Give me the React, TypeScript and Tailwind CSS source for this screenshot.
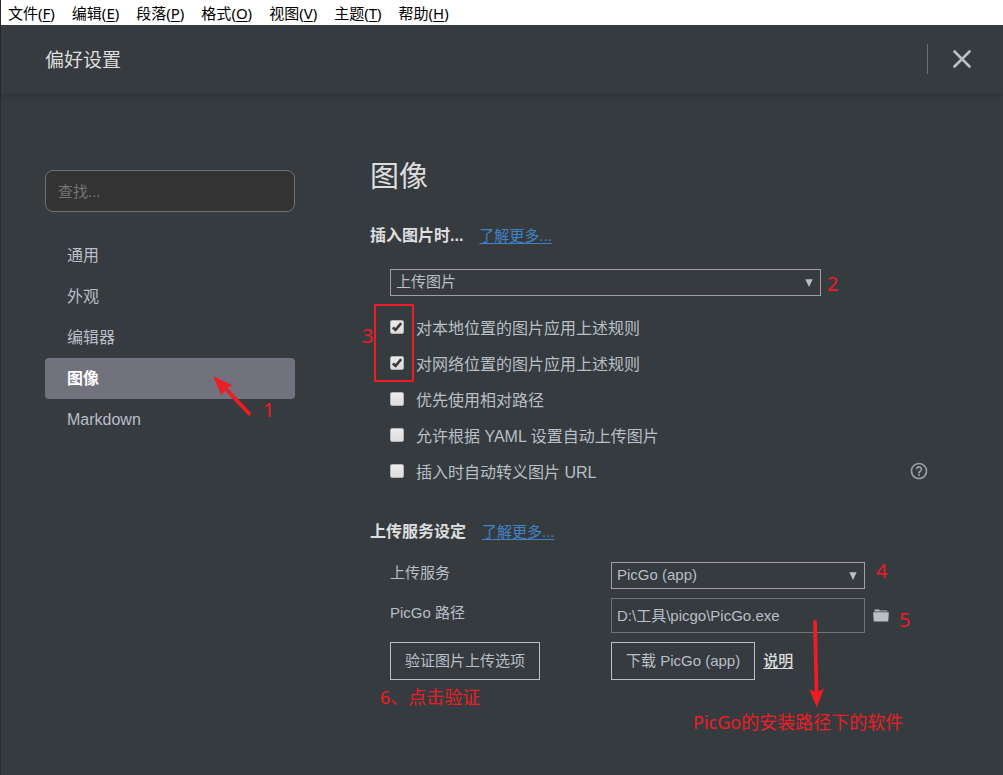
import { ChangeEvent, ReactNode, useState } from "react";
import { MdHelpOutline } from "react-icons/md";

const menuItems = [
  { label: "文件", key: "F" },
  { label: "编辑", key: "E" },
  { label: "段落", key: "P" },
  { label: "格式", key: "O" },
  { label: "视图", key: "V" },
  { label: "主题", key: "T" },
  { label: "帮助", key: "H" },
];

const sections = ["通用", "外观", "编辑器", "图像", "Markdown"];

const initialRules = [
  { id: "local", label: "对本地位置的图片应用上述规则", checked: true },
  { id: "network", label: "对网络位置的图片应用上述规则", checked: true },
  { id: "relative", label: "优先使用相对路径", checked: false },
  { id: "yaml", label: "允许根据 YAML 设置自动上传图片", checked: false },
  { id: "escape", label: "插入时自动转义图片 URL", checked: false },
];

function MenuBar() {
  return (
    <nav className="flex h-[25px] items-center gap-[17px] bg-white pt-0.5 pl-[7px] font-['Noto_Sans','Noto_Sans_CJK_SC',sans-serif] text-[15px] text-black">
      {menuItems.map((item) => (
        <button key={item.key} type="button" className="whitespace-nowrap">
          {item.label}(<u className="underline-offset-2">{item.key}</u>)
        </button>
      ))}
    </nav>
  );
}

function Header() {
  return (
    <header className="flex h-[70px] items-center justify-between border-b border-[#313539] pr-8 pb-0.5 pl-11 shadow-sm">
      <div className="pt-1.5 text-[19px] text-[#dedede]">偏好设置</div>
      <div className="flex items-center gap-[25px]">
        <div className="h-[30px] w-px bg-[#6d7175]" />
        <button type="button" aria-label="关闭">
          <svg
            viewBox="0 0 18 18"
            className="h-[18px] w-[18px] stroke-[#b8bfc6]"
            strokeWidth="2.6"
            strokeLinecap="round"
          >
            <path d="M1.5 1.5 16.5 16.5M16.5 1.5 1.5 16.5" />
          </svg>
        </button>
      </div>
    </header>
  );
}

function Note({ className, children }: { className: string; children: ReactNode }) {
  return (
    <span
      className={`pointer-events-none absolute font-['Noto_Sans','Noto_Sans_CJK_SC',sans-serif] leading-6 font-normal whitespace-nowrap text-[#ee1c25] ${className}`}
    >
      {children}
    </span>
  );
}

function Sidebar() {
  const [current, setCurrent] = useState("图像");

  return (
    <aside className="mt-[15px] w-[250px] shrink-0">
      <input
        type="text"
        aria-label="查找"
        placeholder="查找..."
        className="h-[42px] w-full rounded-lg border border-[#6f7173] bg-[#333333] px-3 text-[15px] placeholder:text-[#757575] focus:outline-none"
      />
      <ul className="mt-[23px]">
        {sections.map((name) => (
          <li key={name} className="relative">
            <button
              type="button"
              onClick={() => setCurrent(name)}
              className={
                name === current
                  ? "h-[41px] w-full rounded bg-[#72727e] pl-[22px] text-left text-base font-bold text-white"
                  : "h-[41px] w-full rounded pl-[22px] text-left text-base"
              }
            >
              {name}
            </button>
            {name === "图像" && (
              <>
                <svg
                  viewBox="0 0 40 42"
                  className="pointer-events-none absolute top-[17px] left-[167px] z-10 h-[42px] w-10"
                >
                  <path d="M13 13 37 38.5" stroke="#ee1c25" strokeWidth="4" strokeLinecap="round" />
                  <path d="M1 1 20.5 10.5 13.8 13 9.5 20.5Z" fill="#ee1c25" />
                </svg>
                <Note className="top-10 left-[218px] z-10 text-xl">1</Note>
              </>
            )}
          </li>
        ))}
      </ul>
    </aside>
  );
}

function SelectBox({
  id,
  label,
  options,
  className,
}: {
  id: string;
  label?: string;
  options: string[];
  className: string;
}) {
  return (
    <div className={`relative ${className}`}>
      <select
        id={id}
        aria-label={label}
        className="block h-[27px] w-full appearance-none border border-[#a09ea2] bg-transparent pb-0.5 pl-[5px] text-[15px] leading-5 focus:outline-none"
      >
        {options.map((option) => (
          <option key={option} className="bg-[#363b40]">
            {option}
          </option>
        ))}
      </select>
      <svg
        viewBox="0 0 8 8"
        className="pointer-events-none absolute top-[10px] right-2 h-2 w-2 fill-[#b8bfc6]"
      >
        <path d="M0.3 0.3h7.4L4 8Z" />
      </svg>
    </div>
  );
}

function SectionTitle({ title }: { title: string }) {
  return (
    <div className="flex items-center gap-4 leading-6">
      <h2 className="text-base leading-6 font-bold text-[#dedede]">{title}</h2>
      <a href="#more" className="text-[15px] text-[#4183c4] underline underline-offset-2">
        了解更多...
      </a>
    </div>
  );
}

function Rules() {
  const [rules, setRules] = useState(initialRules);

  const handleChange = (e: ChangeEvent<HTMLInputElement>) => {
    setRules(
      rules.map((rule) => (rule.id === e.target.id ? { ...rule, checked: e.target.checked } : rule))
    );
  };

  return (
    <div className="relative mt-[15px] ml-5">
      {rules.map((rule) => (
        <div key={rule.id} className="flex h-9 items-center">
          <div className="relative mr-3 mb-1 h-[14px] w-[14px]">
            <input
              type="checkbox"
              id={rule.id}
              checked={rule.checked}
              onChange={handleChange}
              className="peer block h-[14px] w-[14px] appearance-none rounded-xs border border-[#b4b4b4] bg-linear-to-b from-[#ececec] to-[#dcdcdc]"
            />
            <svg
              viewBox="0 0 14 14"
              className="pointer-events-none absolute inset-0 hidden h-[14px] w-[14px] peer-checked:block"
              fill="none"
              stroke="#3c3c3c"
              strokeWidth="2.6"
            >
              <path d="M2.8 7.4 5.6 9.8 11.2 3.2" />
            </svg>
          </div>
          <label htmlFor={rule.id} className="text-base">
            {rule.label}
          </label>
          {rule.id === "escape" && (
            <button type="button" aria-label="帮助" className="mb-1 ml-auto">
              <MdHelpOutline className="h-5 w-5 text-[#9a9fa4]" />
            </button>
          )}
        </div>
      ))}
      <div className="pointer-events-none absolute -top-[7px] -left-4 h-[78px] w-10 border-2 border-[#ee1c25]" />
      <Note className="top-[13px] -left-7 text-xl">3</Note>
    </div>
  );
}

function UploadService() {
  const [path, setPath] = useState("D:\\工具\\picgo\\PicGo.exe");

  return (
    <div className="mt-[18px] ml-5 grid grid-cols-[221px_1fr] gap-y-[9px] text-[15px]">
      <label htmlFor="service" className="leading-[22px]">
        上传服务
      </label>
      <div className="relative w-[254px]">
        <SelectBox id="service" options={["PicGo (app)"]} className="w-full" />
        <Note className="-top-[3px] left-[265px] text-xl">4</Note>
      </div>

      <label htmlFor="path" className="pt-1 leading-[22px]">
        PicGo 路径
      </label>
      <div className="relative flex items-center gap-2">
        <input
          type="text"
          id="path"
          value={path}
          onChange={(e) => setPath(e.target.value)}
          className="h-[35px] w-[254px] border border-[#707376] bg-transparent px-[5px] pb-0.5 focus:outline-none"
        />
        <button type="button" aria-label="选择文件夹">
          <svg viewBox="0 0 16 13" className="h-[13px] w-4 fill-[#b8bfc6]">
            <path d="M1.5 2.6V1.2Q1.5.5 2.2.5H6L7 1.6H13.8Q14.5 1.6 14.5 2.3V2.6Z" />
            <path d="M.8 3.2H15.2Q15.9 3.2 15.8 4L15.3 11.8Q15.2 12.5 14.5 12.5H1.5Q.8 12.5.7 11.8L.2 4Q.1 3.2.8 3.2Z" />
          </svg>
        </button>
        <Note className="top-[10px] left-[288px] text-xl">5</Note>
        <svg
          viewBox="0 0 18 90"
          className="pointer-events-none absolute top-[20px] left-[197px] z-10 h-[90px] w-[18px]"
        >
          <path d="M7 4 8.5 74" stroke="#ee1c25" strokeWidth="3.8" strokeLinecap="round" />
          <path d="M8.7 89.5 1.3 71.3 8.5 74.5 16 70.5Z" fill="#ee1c25" />
        </svg>
        <Note className="top-[112px] left-[82px] text-lg">PicGo的安装路径下的软件</Note>
      </div>

      <div className="relative">
        <button type="button" className="h-[38px] border border-[#b8bfc6] px-[14px]">
          验证图片上传选项
        </button>
        <Note className="top-[43px] -left-[10px] text-lg">6、点击验证</Note>
      </div>
      <div className="flex items-center gap-2">
        <button type="button" className="h-[38px] border border-[#b8bfc6] px-[14px]">
          下载 PicGo (app)
        </button>
        <a href="#guide" className="font-medium text-[#dedede] underline underline-offset-2">
          说明
        </a>
      </div>
    </div>
  );
}

export default function App() {
  return (
    <div className="min-h-screen border-l border-[#2b2b2b] bg-[#363b40] font-['Liberation_Sans','Noto_Sans_CJK_SC',sans-serif] text-[#b8bfc6]">
      <MenuBar />
      <Header />
      <div className="flex gap-[75px] pt-[60px] pr-[74px] pb-16 pl-11">
        <Sidebar />
        <main className="min-w-0 flex-1">
          <h1 className="mb-[25px] text-[29px] leading-11 text-[#dedede]">图像</h1>
          <SectionTitle title="插入图片时..." />
          <div className="relative mt-[21px] ml-5 w-[431px]">
            <SelectBox
              id="insert"
              label="插入图片时"
              options={["上传图片", "无特殊操作"]}
              className="w-full"
            />
            <Note className="top-[3px] left-[437px] text-xl">2</Note>
          </div>
          <Rules />
          <div className="mt-[29px]">
            <SectionTitle title="上传服务设定" />
          </div>
          <UploadService />
        </main>
      </div>
    </div>
  );
}
